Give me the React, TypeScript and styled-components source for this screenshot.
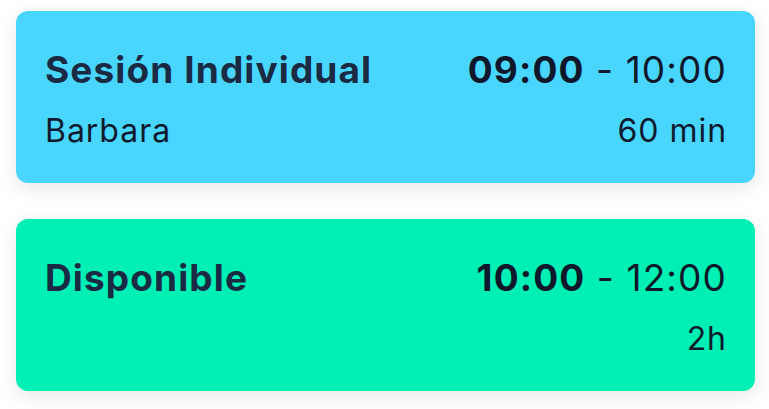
import * as React from 'react'
import styled, { createGlobalStyle } from 'styled-components'

const GlobalStyle = createGlobalStyle`
    body {
        margin: 0;
        background: #ffffff;
        font-family: Inter, 'Noto Sans', sans-serif;
    }
`

type Slot = {
    title: string
    subtitle?: string
    start: string
    end: string
    duration: string
    color: string
}

const slots: Slot[] = [
    { title: 'Sesión Individual', subtitle: 'Barbara', start: '09:00', end: '10:00', duration: '60 min', color: '#48d6ff' },
    { title: 'Disponible', start: '10:00', end: '12:00', duration: '2h', color: '#00efb4' },
]

const App = (): JSX.Element => {
    return (
        <>
            <GlobalStyle />
            <List>
                {slots.map((slot) => (
                    <Card key={slot.title} $color={slot.color}>
                        <TopRow>
                            <Title>{slot.title}</Title>
                            <Time>
                                <strong>{slot.start}</strong> - {slot.end}
                            </Time>
                        </TopRow>
                        <BottomRow>
                            <Sub>{slot.subtitle ?? ''}</Sub>
                            <Sub>{slot.duration}</Sub>
                        </BottomRow>
                    </Card>
                ))}
            </List>
        </>
    )
}

const List = styled.div`
    display: flex;
    flex-direction: column;
    gap: 36px;
    padding: 11px 14px 18px 16px;
`
const Card = styled.div<{ $color: string }>`
    background-color: ${(p) => p.$color};
    border-radius: 12px;
    box-shadow: 0 5px 20px rgba(0, 0, 0, 0.1);
    padding: 37px 28px 34px 29px;
    display: flex;
    flex-direction: column;
    gap: 21px;
`
const TopRow = styled.div`
    display: flex;
    justify-content: space-between;
    align-items: baseline;
    height: 44px;
    line-height: 44px;
    font-size: 37px;
    letter-spacing: 0.03em;
`
const BottomRow = styled.div`
    display: flex;
    justify-content: space-between;
    height: 36px;
    line-height: 36px;
    font-size: 32px;
    letter-spacing: 0.03em;
    color: #101a2d;
`
const Title = styled.div`
    font-weight: 700;
    color: #1b2a43;
`
const Time = styled.div`
    color: #0f172a;
    font-weight: 400;
    strong {
        font-weight: 700;
    }
`
const Sub = styled.div``

export default App
